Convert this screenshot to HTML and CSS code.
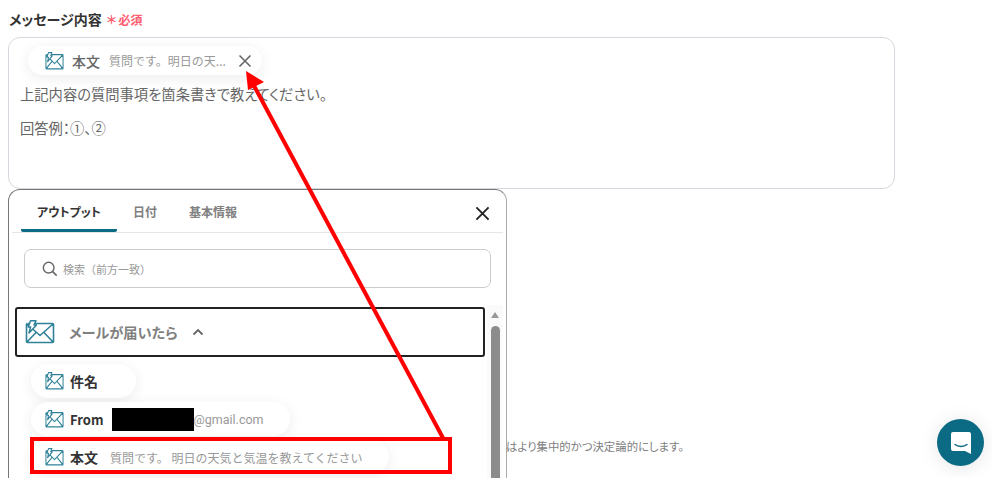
FILE: index.html
```html
<!DOCTYPE html>
<html lang="ja">

<head>
    <meta charset="utf-8">
    <link rel="stylesheet" href="styles.css">
    <title>メッセージ内容</title>
</head>

<body>
    <svg class="defs" width="0" height="0">
        <symbol id="mail" viewBox="0 0 30 24" preserveAspectRatio="none">
            <path d="M3 3.5H27.5a1 1 0 0 1 1 1V21.5a1 1 0 0 1-1 1H2.5a1 1 0 0 1-1-1V4.5a1 1 0 0 1 1-1M2 4L15 15.5L28 4M2 22L11 12.5M28 22L19 12.5" fill="none" stroke="#2f8299" stroke-width="1.6" stroke-linejoin="round"/>
            <path d="M5.5 0.8H11L9 5H11.5L4 13L5.6 7H3.2Z" fill="#fff" stroke="#2f8299" stroke-width="1.5" stroke-linejoin="round"/>
        </symbol>
    </svg>

    <div class="field-label">メッセージ内容<span class="required"><span class="star">＊</span>必須</span></div>
    <div class="message-box">
        <div class="chip chip-selected">
            <svg class="chip-icon"><use href="#mail"/></svg>
            <span class="chip-name">本文</span>
            <span class="chip-value">質問です。明日の天...</span>
            <svg class="chip-close" viewBox="0 0 14 14"><path d="M1.5 1.5L12.5 12.5M12.5 1.5L1.5 12.5" stroke="#666" stroke-width="1.6"/></svg>
        </div>
        <p>上記内容の質問事項を箇条書きで教えてください。</p>
        <p>回答例：①、②</p>
    </div>

    <div class="lower">
        <div class="panel">
            <div class="tabs">
                <div class="tab tab-active">アウトプット</div>
                <div class="tab">日付</div>
                <div class="tab">基本情報</div>
                <svg class="panel-close" viewBox="0 0 16 16"><path d="M1.5 1.5L14.5 14.5M14.5 1.5L1.5 14.5" stroke="#222" stroke-width="2"/></svg>
            </div>
            <div class="search">
                <svg class="search-icon" viewBox="0 0 18 18"><circle cx="7.5" cy="7.5" r="6" fill="none" stroke="#666" stroke-width="1.6"/><path d="M12 12L16.5 16.5" stroke="#666" stroke-width="1.8"/></svg>
                <span>検索（前方一致）</span>
            </div>
            <div class="list">
                <div class="list-main">
                    <div class="accordion">
                        <svg class="accordion-icon"><use href="#mail"/></svg>
                        <span class="accordion-title">メールが届いたら</span>
                        <svg class="chevron" viewBox="0 0 12 8"><path d="M1.5 6.5L6 2L10.5 6.5" fill="none" stroke="#666" stroke-width="1.8"/></svg>
                    </div>
                    <div class="chip">
                        <svg class="chip-icon"><use href="#mail"/></svg>
                        <span class="chip-name chip-dark">件名</span>
                    </div>
                    <div class="chip chip-from">
                        <svg class="chip-icon"><use href="#mail"/></svg>
                        <span class="chip-name chip-dark">From</span>
                        <span class="chip-value chip-mail"><span class="redact"></span>@gmail.com</span>
                    </div>
                    <div class="chip">
                        <svg class="chip-icon"><use href="#mail"/></svg>
                        <span class="chip-name chip-dark">本文</span>
                        <span class="chip-value">質問です。 明日の天気と気温を教えてください</span>
                    </div>
                </div>
                <div class="scrollbar">
                    <div class="scroll-up"></div>
                    <div class="scroll-thumb"></div>
                </div>
            </div>
        </div>
        <div class="hint">はより集中的かつ決定論的にします。</div>
    </div>

    <div class="chat-button">
        <svg viewBox="0 0 22 24" width="22" height="24"><path d="M3 1H19a2 2 0 0 1 2 2V23L15 20H3a2 2 0 0 1-2-2V3a2 2 0 0 1 2-2Z" fill="#fff"/><path d="M5 13.5C8 16 14 16 17 13.5" fill="none" stroke="#0c6b84" stroke-width="1.5" stroke-linecap="round"/></svg>
    </div>

    <!-- annotation on top of the screenshot -->
    <div class="red-box"></div>
    <svg class="arrow" width="992" height="478" viewBox="0 0 992 478">
        <path d="M443 438L252 82" stroke="#f00" stroke-width="4" fill="none"/>
        <path d="M246 71L264 82L248 90Z" fill="#f00"/>
    </svg>
</body>

</html>
```

FILE: styles.css
```css
html, body {
    height: 100%;
}

body {
    margin: 0;
    padding: 0 8px;
    box-sizing: border-box;
    height: 478px;
    overflow: hidden;
    background: #fff;
    font-family: "Noto Sans CJK JP", "Noto Sans", sans-serif;
    font-feature-settings: "palt";
    color: #666;
}

.defs {
    position: absolute;
}

.field-label {
    height: 37px;
    padding: 9px 0 0 1px;
    box-sizing: border-box;
    font-size: 14px;
    line-height: 20px;
    font-weight: 700;
    color: #333;
}

.required {
    margin-left: 5px;
    font-size: 12px;
    color: #ff5c70;
}

.star {
    margin-right: 2px;
}

.message-box {
    width: 887px;
    height: 152px;
    box-sizing: border-box;
    padding: 8px 11px;
    border: 1px solid #d3d9de;
    border-radius: 12px;
    font-size: 14.3px;
    color: #666;
}

.message-box p {
    margin: 0 0 15px;
    line-height: 19px;
}

.chip {
    display: flex;
    align-items: center;
    width: fit-content;
    height: 34px;
    padding: 0 26px 0 14px;
    border-radius: 17px;
    background: #fff;
    box-shadow: 0 3px 14px rgba(0, 0, 0, 0.08);
    font-size: 12px;
    white-space: nowrap;
}

.chip-selected {
    height: 29px;
    margin: 0 0 9px 8px;
    padding: 0 10px 0 17px;
}

.chip-icon {
    width: 19px;
    height: 18px;
    margin-right: 6px;
}

.chip-selected .chip-icon {
    margin-right: 8px;
}

.chip-name {
    margin-right: 9px;
    font-size: 14px;
    font-weight: 500;
    color: #666;
}

.chip-dark {
    margin-right: 12px;
    font-weight: 700;
    color: #333;
}

.chip-value {
    font-feature-settings: normal;
    color: #999;
}

.chip-close {
    width: 14px;
    height: 14px;
    margin-left: 12px;
}

.chip-from .chip-name {
    margin-right: 8px;
    font-size: 13px;
}

.chip-mail {
    display: flex;
    align-items: center;
    font-family: "Roboto", sans-serif;
    font-size: 12.5px;
}

.redact {
    width: 82px;
    height: 23px;
    background: #000;
}

.lower {
    display: flex;
    align-items: flex-start;
}

.panel {
    flex: none;
    width: 499px;
    height: 289px;
    box-sizing: border-box;
    overflow: hidden;
    border: 1px solid #777;
    border-right-color: #aaa;
    border-bottom: 0;
    border-radius: 12px 12px 0 0;
    background: #fff;
}

.tabs {
    display: flex;
    align-items: flex-start;
    height: 43px;
    box-sizing: border-box;
    margin: 0 3px;
    padding: 0 9px;
    border-bottom: 1px solid #e6e6e6;
}

.tab {
    height: 42px;
    box-sizing: border-box;
    padding: 0 16px;
    font-size: 12px;
    line-height: 44px;
    font-weight: 700;
    color: #808080;
}

.tab-active {
    color: #333;
    border-bottom: 3px solid #0c6b84;
    border-radius: 2px;
}

.panel-close {
    width: 15px;
    height: 15px;
    margin: 16px 4px 0 auto;
}

.search {
    display: flex;
    align-items: center;
    gap: 5px;
    width: 467px;
    height: 39px;
    box-sizing: border-box;
    margin: 16px 0 0 15px;
    padding-left: 17px;
    border: 1px solid #ccc;
    border-radius: 7px;
    font-size: 11px;
    font-feature-settings: normal;
    color: #999;
}

.search-icon {
    width: 16px;
    height: 16px;
}

.list {
    display: flex;
    gap: 2px;
    height: 171px;
    margin: 19px 0 0 6px;
}

.list-main {
    display: flex;
    flex-direction: column;
    flex: none;
    gap: 4px;
    width: 470px;
}

.accordion {
    display: flex;
    flex: none;
    align-items: center;
    height: 50px;
    box-sizing: border-box;
    margin-bottom: 3px;
    padding-left: 8px;
    border: 2px solid #222;
    border-radius: 3px;
}

.accordion-icon {
    width: 30px;
    height: 24px;
    margin-right: 14px;
}

.accordion-title {
    font-size: 14.2px;
    font-weight: 700;
    color: #808080;
}

.chevron {
    width: 12px;
    height: 8px;
    margin-left: 14px;
}

.list .chip {
    flex: none;
    margin-left: 16px;
}

.scrollbar {
    display: flex;
    flex-direction: column;
    align-items: center;
    width: 16px;
    height: 173px;
    margin-top: -2px;
    background: #fafafa;
}

.scroll-up {
    width: 0;
    height: 0;
    margin: 7px 0 8px;
    border: 4px solid transparent;
    border-top: 0;
    border-bottom: 6px solid #999;
}

.scroll-thumb {
    width: 9px;
    height: 152px;
    border-radius: 5px 5px 0 0;
    background: #8c8c8c;
}

.hint {
    flex: none;
    margin: 249px 0 0 -1px;
    font-size: 11.4px;
    line-height: 16px;
    color: #808080;
}

.chat-button {
    position: fixed;
    right: 8px;
    bottom: 12px;
    display: flex;
    align-items: center;
    justify-content: center;
    width: 47px;
    height: 47px;
    border-radius: 50%;
    background: #0c6b84;
    box-shadow: 0 2px 20px rgba(0, 0, 0, 0.1);
}

.red-box {
    position: fixed;
    left: 30px;
    top: 437px;
    width: 422px;
    height: 37px;
    box-sizing: border-box;
    border: 4px solid #f00;
}

.arrow {
    position: fixed;
    left: 0;
    top: 0;
    pointer-events: none;
}
```
